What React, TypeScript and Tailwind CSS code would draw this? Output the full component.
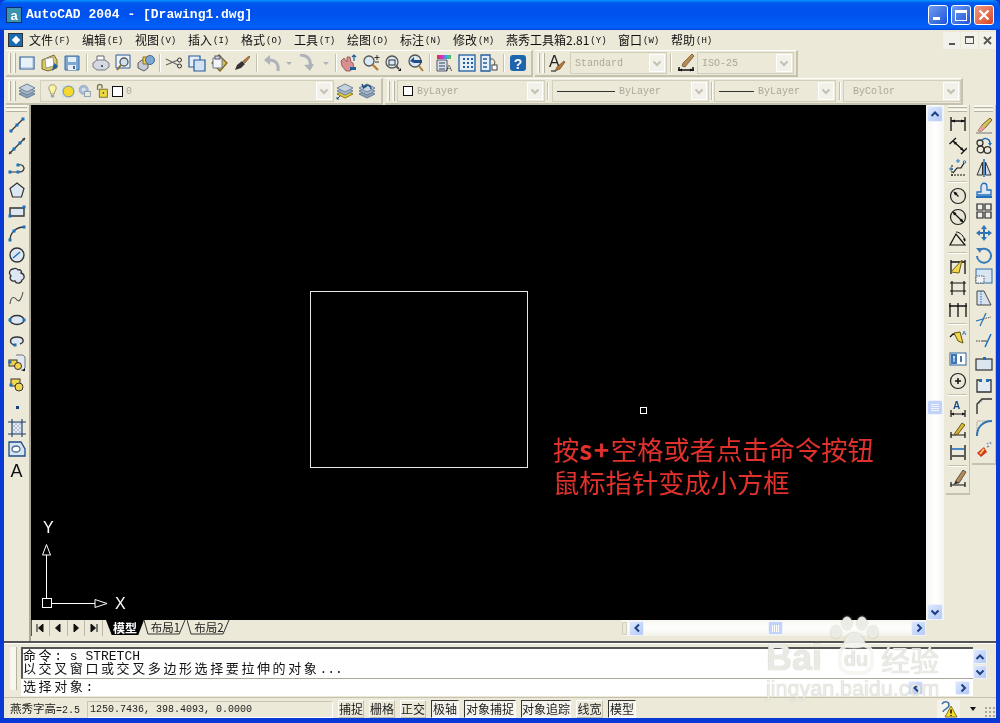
import React from "react";

const mono = "font-['Liberation_Mono','Noto_Sans_CJK_SC',monospace]";
const cjk = "font-['Noto_Sans_CJK_SC','Liberation_Sans',sans-serif]";
const B = "#1f6fc0";
const N = ({ x, y }: { x: number; y: number }) => <rect x={x - 1.5} y={y - 1.5} width="3" height="3" fill={B} />;
const S = ({ children, s = 18 }: { children: React.ReactNode; s?: number }) => (
  <svg width={s} height={s} viewBox="0 0 18 18" fill="none" className="block">{children}</svg>
);
const D = "#333333";
const Sheet = "#dbe8f4";
const Y = "#f2d64b";

const icons: Record<string, React.ReactNode> = {
  line: <><path d="M3 15L15 3" stroke={D} strokeWidth="1.2" /><N x={3} y={15} /><N x={9} y={9} /><N x={15} y={3} /></>,
  xline: <><path d="M1 17L17 1" stroke={D} strokeWidth="1.2" /><path d="M1 17l3-.8L1.8 14zM17 1l-3 .8L16.2 4z" fill={D} /><N x={6} y={12} /><N x={12} y={6} /></>,
  pline: <><path d="M2 13H11C16 13 17 9 15 7 14 6 12 5.500 10 6" stroke={D} strokeWidth="1.2" /><N x={2} y={13} /><N x={10} y={13} /><N x={10} y={6} /></>,
  polygon: <><path d="M9 2L16 7.500 13.500 16H4.500L2 7.500Z" fill={Sheet} stroke={D} strokeWidth="1.2" /></>,
  rect: <><path d="M2 6H16V14H2Z" fill={Sheet} stroke={D} strokeWidth="1.4" /><N x={16} y={5} /><N x={2} y={14} /></>,
  arc: <><path d="M2 16C2 9 8 3 16 3" stroke={D} strokeWidth="1.3" /><N x={2} y={16} /><N x={6} y={7} /><N x={16} y={3} /></>,
  circle: <><circle cx="9" cy="9" r="7" fill={Sheet} stroke={D} strokeWidth="1.4" /><path d="M5 12L12 6" stroke={B} strokeWidth="1.4" /></>,
  cloud: <><path d="M5 2C8 0 10 3 10 3 13 2 14 5 13 6 17 7 17 12 14 13 13 17 8 17 7 14 3 15 1 11 3 9 0 6 2 2 5 2Z" fill={Sheet} stroke={D} strokeWidth="1.3" /></>,
  spline: <><path d="M2 15C3 6 7 8 9 11 11 14 14 9 15 3" stroke="#555" strokeWidth="1.1" /></>,
  ellipse: <><ellipse cx="9" cy="9" rx="7" ry="4.500" fill={Sheet} stroke={D} strokeWidth="1.4" /><N x={2} y={9} /><N x={16} y={9} /></>,
  earc: <><path d="M6 13C1 11 1 5 9 5 16 5 17 10 12 12" stroke={D} strokeWidth="1.4" fill={Sheet} /><N x={7} y={13} /></>,
  insert: <><path d="M8 1H15L17 3V14L15 16H13" stroke="#777" strokeWidth="1" fill="#dfe8ee" /><rect x="1" y="6" width="8" height="6" fill={Y} stroke={D} /><circle cx="10" cy="12" r="3.500" fill={Y} stroke={D} /><N x={2} y={8} /><path d="M14 17l3-3v3z" fill="#111" /></>,
  block: <><rect x="3" y="3" width="9" height="7" fill={Y} stroke={D} /><circle cx="11" cy="11" r="4" fill={Y} stroke={D} /><N x={3} y={9} /></>,
  point: <><rect x="8" y="9" width="3" height="3" fill="#1b3f78" /></>,
  hatch: <><path d="M4 3H14V15H4Z" fill="#b7c4d8" /><path d="M4 7L8 3M4 11L12 3M4 15L14 5M8 15L14 9M12 15L14 13M8 3L14 9M4 3L14 13M4 7L12 15M4 11L8 15" stroke="#fff" strokeWidth=".7" /><path d="M4 0V18M14 0V18M0 3H18M0 15H18" stroke="#1c3d6d" strokeWidth="1.1" /></>,
  region: <><path d="M1 2H13L17 9V16H1Z" fill="#d7e3ee" stroke="#1c4e86" strokeWidth="1.300" /><ellipse cx="8" cy="9" rx="4" ry="3" fill="#fff" stroke="#466a95" strokeWidth="1.3" /></>,
  dimlin: <><path d="M2 1V15M16 1V15M2 5H16" stroke="#111" strokeWidth="1.3" /><path d="M2 5l4-1.500v3zM16 5l-4-1.500v3z" fill="#111" /></>,
  dimali: <><path d="M4 4L15 14M0.500 7L7 1M12 17L18 11" stroke="#111" strokeWidth="1.3" /><path d="M4 4l4 1.500-2 2.500zM15 14l-4-1.500 2-2.500z" fill="#111" /></>,
  ord: <><path d="M2 16H17M3 6V17" stroke="#111" strokeWidth="1" strokeDasharray="2 1" /><path d="M4 14L8 9H12L15 4" stroke="#111" strokeWidth="1.200" /><circle cx="15.500" cy="3" r="1.200" stroke={B} /><circle cx="2" cy="10" r="1.200" stroke={B} /><circle cx="9" cy="2" r="1.200" stroke={B} /></>,
  dimrad: <><circle cx="9" cy="9" r="7.500" fill="#e7e5d6" stroke="#222" strokeWidth="1.2" /><path d="M5 5L9.500 9.500" stroke="#111" strokeWidth="1.3" /><path d="M4.500 4.500l4 1.500-2.500 2.500z" fill="#111" /></>,
  dimdia: <><circle cx="9" cy="9" r="7.500" fill="#e7e5d6" stroke="#222" strokeWidth="1.2" /><path d="M4 4L14 14" stroke="#111" strokeWidth="1.3" /><path d="M3.500 3.500l4 1.500-2.500 2.500zM14.500 14.500l-4-1.500 2.500-2.500z" fill="#111" /></>,
  dimang: <><path d="M1 15H16L7 4Z" stroke="#111" strokeWidth="1.2" /><path d="M7 2C11 2 15 6 16 11" stroke="#111" /><path d="M16 12l-2-3 2.500-.5z" fill="#111" /></>,
  qdim: <><path d="M2 2V16M16 2V16M2 4H16" stroke="#111" strokeWidth="1.3" /><path d="M2 14L13 2 10 15Z" fill={Y} stroke="#6c6015" /></>,
  dimbase: <><path d="M3 2V16M15 2V16M1 4H17M1 12H17" stroke="#111" strokeWidth="1.200" /></>,
  dimcont: <><path d="M1 2V16M9 2V16M17 2V16M0 5H18" stroke="#111" strokeWidth="1.300" /></>,
  lead: <><path d="M1 8L4 5 9 6" stroke="#111" strokeWidth="1.300" /><path d="M5 4L11 3 14 14 9 12Z" fill={Y} stroke="#5c5710" /><text x="13" y="6" fontSize="6" fill={B} fontFamily="Liberation Sans" fontWeight="700">A</text></>,
  tol: <><rect x="1" y="3" width="16" height="12" fill="#fff" stroke="#2b64a0" /><rect x="2" y="4" width="6" height="10" fill="#3b76b5" /><path d="M5 6V12M4 7H6M11 5V13" stroke="#fff" /><path d="M12 6V12" stroke="#17457d" strokeWidth="1.500" /></>,
  center: <><circle cx="9" cy="9" r="7.500" fill="#e9e7d8" stroke="#222" strokeWidth="1.200" /><path d="M6 9H12M9 6V12" stroke="#111" strokeWidth="1.500" /></>,
  dimedit: <><text x="4" y="9" fontSize="10" fontWeight="700" fontFamily="Liberation Sans" fill="#1c4e86">A</text><path d="M2 10V17M16 10V17M2 14H16" stroke="#111" strokeWidth="1.200" /><path d="M2 14l3-1.500v3zM16 14l-3-1.500v3z" fill="#111" /></>,
  dimtedit: <><path d="M2 11V17M16 11V17M2 14H16" stroke="#111" strokeWidth="1.200" /><path d="M6 12L13 2 16 4 9 13 5 14Z" fill="#d8b63a" stroke="#6a5a10" /></>,
  dimupd: <><path d="M2 2V17M16 2V17" stroke="#111" strokeWidth="1.300" /><path d="M3 6H15" stroke={B} strokeWidth="1.600" /><path d="M3 13H15" stroke="#111" strokeWidth="1.300" /></>,
  dimstyle: <><path d="M2 12V17M16 12V17M2 15H16" stroke="#111" strokeWidth="1.200" /><path d="M6 12L10 13 17 2 14 0Z" fill="#b68a55" stroke="#555" /><path d="M4 15L7 11 10 13Z" fill="#333" /></>,
  erase: <><path d="M3 15L7 9 15 2 17 4 10 12 7 15Z" fill="#d9c15a" stroke="#6b5f2b" /><path d="M7 9L10 12 7 15H3Z" fill="#e9a0a0" /><path d="M1 17H17" stroke="#777" /></>,
  copy: <><circle cx="5" cy="6" r="3" stroke="#333" strokeWidth="1.300" /><circle cx="5.500" cy="12.500" r="3.300" stroke="#333" strokeWidth="1.300" /><circle cx="12.500" cy="13" r="3.300" stroke="#333" strokeWidth="1.300" /><path d="M7 3C10 0 15 2 15 6" stroke={B} strokeWidth="1.500" /><path d="M13 6h4l-2 3z" fill={B} /></>,
  mirror: <><path d="M7.500 3V16H2Z" fill="#e0e0d5" stroke="#333" /><path d="M10.500 3V16H16Z" fill="#cfd9e5" stroke="#333" /><path d="M9 0V18" stroke={B} strokeWidth="1.500" /></>,
  offset: <><path d="M2 14V11H6V6C6 1 12 1 12 6V9H16V14Z" stroke={B} strokeWidth="1.300" fill="#dce7f2" /><path d="M1 16H17" stroke={B} strokeWidth="2" /></>,
  array: <><path d="M2 2H8V8H2ZM10 2H16V8H10ZM2 10H8V16H2ZM10 10H16V16H10Z" stroke="#222" strokeWidth="1.200" fill="#eeeeea" /></>,
  move: <><path d="M9 1L12 5H10V8H13V6L17 9 13 12V10H10V13H12L9 17 6 13H8V10H5V12L1 9 5 6V8H8V5H6Z" fill="#2f74b5" /></>,
  rotate: <><path d="M5 4A7 7 0 1 1 2 10" stroke="#3a7bbb" strokeWidth="2" /><path d="M1 2L7 2 5 7Z" fill="#3a7bbb" /></>,
  scale: <><rect x="1" y="2" width="16" height="14" fill="#d8e5f2" stroke="#2f6ca8" /><rect x="1" y="9" width="8" height="7" fill="#eef3f8" stroke="#555" strokeDasharray="1.500 1" /></>,
  stretch: <><path d="M2 2H9L16 16H2Z" fill="#d8e2ec" stroke="#444" /><path d="M6 2V16" stroke={B} strokeDasharray="1.500 1" /></>,
  trim: <><path d="M1 10L8 8" stroke={B} strokeWidth="1.300" /><path d="M8 8L16 6" stroke="#555" strokeDasharray="1.500 1" /><path d="M11 2L5 15" stroke="#2f74b5" strokeWidth="1.300" /></>,
  extend: <><path d="M1 9H7" stroke="#444" strokeDasharray="1.500 1" /><path d="M7 9H12" stroke="#444" /><path d="M16 2L10 15" stroke={B} strokeWidth="1.500" /></>,
  breakp: <><rect x="1" y="5" width="16" height="11" fill="#dbe5ef" stroke="#333" strokeWidth="1.200" /><rect x="8" y="3" width="3" height="3" fill={B} /></>,
  breakg: <><path d="M2 6H16V16H2Z" fill="#e3ebf3" /><path d="M5 4H2V16H16V4H13" stroke="#333" strokeWidth="1.300" /><rect x="4" y="3" width="3" height="3" fill={B} /><rect x="11" y="3" width="3" height="3" fill={B} /></>,
  chamfer: <><path d="M2 17V7L7 2H17" stroke="#333" strokeWidth="1.400" /><path d="M2 8L9 2" stroke={B} strokeDasharray="1.500 1" /></>,
  fillet: <><path d="M2 17V2H17" stroke="#999" strokeDasharray="1.500 1" /><path d="M2 17C2 8 8 2 17 2" stroke="#2f74b5" strokeWidth="2" /></>,
  explode: <><path d="M2 13L9 7 12 12 6 17Z" fill="#d3342a" /><path d="M5 14L9 9" stroke="#f3d24d" strokeWidth="2" /><path d="M12 3l1 1M15 2l1 2M12 7l2-1" stroke="#7a8fb0" strokeWidth="1.500" /></>,
  new: <><path d="M2 3H16V15H2Z" fill="#e8f0f8" stroke="#2a5c9a" strokeWidth="1.200" /><path d="M15 4V14H3" stroke="#9fb9d4" /></>,
  open: <><path d="M1 6L13 1 16 6V14L7 17 1 15Z" fill="#d9c76c" stroke="#7f6d2c" /><path d="M4 5L12 3 13 12 5 14Z" fill="#fff" stroke="#9b9b8b" /><path d="M11 17L13 9 17 12Z" fill="#1f5f9e" /></>,
  save: <><path d="M2 2H16V16H2Z" fill="#7ea8d2" stroke="#3a6ca3" /><rect x="5" y="3" width="8" height="5" fill="#e2edf7" /><rect x="5" y="11" width="8" height="5" fill="#e9eef3" /><rect x="10" y="12" width="2" height="3" fill="#3a6ca3" /></>,
  print: <><path d="M5 2H12V8H5Z" fill="#fff" stroke="#667" /><path d="M1 9L5 6H13L17 9V13L13 16H5L1 13Z" fill="#d4d8e0" stroke="#778" /><circle cx="10" cy="12" r="1" fill="#334" /></>,
  preview: <><path d="M2 1H16V14H2Z" fill="#eef3f8" stroke="#2a5c9a" /><circle cx="10" cy="8" r="4" fill="#cfe0f0" stroke="#555" strokeWidth="1.300" /><path d="M7 11L3 16" stroke="#8a6a30" strokeWidth="2" /></>,
  publish: <><path d="M1 9L5 6H11V14L7 17L1 14Z" fill="#c7ccd6" stroke="#556" /><path d="M6 3H12V10H6Z" fill="#f2cf4f" stroke="#8a6d1a" /><circle cx="13" cy="6" r="4.500" fill="#7ea8d4" stroke="#46688f" /></>,
  cut: <><path d="M1 5L13 11M1 11L13 6" stroke="#666" strokeWidth="1.100" /><circle cx="14.500" cy="6" r="2" stroke="#333" /><circle cx="14.500" cy="12" r="2" stroke="#333" /></>,
  dup: <><path d="M1 2H12V13H1Z" fill="#e5eef7" stroke="#2a5c9a" strokeWidth="1.200" /><path d="M6 6H17V17H6Z" fill="#d3e2f1" stroke="#2a5c9a" strokeWidth="1.200" /></>,
  paste: <><path d="M9 1L17 9 10 17 2 9Z" fill="#d9b85c" stroke="#7a641b" strokeWidth="1.200" /><path d="M3 4H12V14H3Z" fill="#f2f4f7" stroke="#6a7b90" /><rect x="5" y="2" width="5" height="3" fill="#cfd7e0" stroke="#556" /></>,
  brush: <><path d="M10 7L16 2 17 3 12 9Z" fill="#b6793a" stroke="#6e4a20" strokeWidth=".6" /><path d="M4 11L9 7 12 10 8 14 2 16Z" fill="#333" /></>,
  undo: <><path d="M15 17C16 9 12 6 6 6" stroke="#aeb3ba" strokeWidth="3" /><path d="M7 1L1 6 7 11Z" fill="#aeb3ba" /></>,
  redo: <><path d="M3 1C9 1 15 4 13 14" stroke="#aeb3ba" strokeWidth="3" fill="none" /><path d="M7 11L13 17 17 10Z" fill="#aeb3ba" /></>,
  pan: <><path d="M2 7L5 4 8 8 8 3 11 3 12 8 14 9 15 14 11 17H7L3 12Z" fill="#d99090" stroke="#8a4a4a" strokeWidth=".8" /><path d="M11 16h6v-3h-6z" fill="#1f5f9e" /><path d="M15 1V7M13 3l2-2 2 2" stroke="#1f5f9e" strokeWidth="1.200" /></>,
  zoomr: <><circle cx="7" cy="7" r="5" fill="#d9e8f5" stroke="#555" strokeWidth="1.300" /><path d="M10.500 10.500L16 16" stroke="#b27d30" strokeWidth="2.200" /><path d="M15 1V6M12.500 3.500H17.500M13 8H17" stroke="#333" /></>,
  zoomw: <><circle cx="8" cy="8" r="6" fill="#d9e8f5" stroke="#555" strokeWidth="1.300" /><rect x="5" y="6" width="6" height="5" stroke="#333" /><path d="M12 12L15 15" stroke="#555" strokeWidth="2" /><path d="M14 17l3-3v3z" fill="#111" /></>,
  zoomp: <><circle cx="8" cy="7" r="6" fill="#d9e8f5" stroke="#555" strokeWidth="1.300" /><path d="M3 7L7 3V6H15V9H7Z" fill="#1f4f84" /><path d="M12 12L16 17" stroke="#b27d30" strokeWidth="2" /></>,
  props: <><path d="M2 1H16V5H2Z" fill="url(#rb)" /><defs><linearGradient id="rb"><stop offset="0" stopColor="#e03030" /><stop offset=".35" stopColor="#d030d0" /><stop offset=".7" stopColor="#30b0e0" /><stop offset="1" stopColor="#50c050" /></linearGradient></defs><path d="M2 6H12V17H2Z" fill="#d8e2ec" stroke="#556" /><path d="M4 9H10M4 12H10M4 15H10" stroke="#345" /><text x="11" y="17" fontSize="9" fontFamily="Liberation Sans" fill="#333">A</text></>,
  design: <><rect x="1" y="1" width="16" height="16" fill="#e5eef7" stroke="#1f5f9e" strokeWidth="1.300" /><path d="M5 4H7V6H5ZM9 4H11V6H9ZM13 4H15V6H13ZM5 8H7V10H5ZM9 8H11V10H9ZM13 8H15V10H13ZM5 12H7V14H5ZM9 12H11V14H9ZM13 12H15V14H13Z" fill="#1f5f9e" /></>,
  palette: <><path d="M1 1H10V17H1Z" fill="#e5eef7" stroke="#1f5f9e" strokeWidth="1.300" /><path d="M3 5H7M3 9H7M3 13H7" stroke="#1f5f9e" strokeWidth="1.500" /><path d="M10 5C14 4 16 8 14 11" stroke="#444" /><rect x="12" y="11" width="5" height="5" fill="#fff" stroke="#444" /></>,
  help: <><rect x="1" y="1" width="16" height="16" rx="3" fill="#1d65ad" /><text x="9" y="14.500" fontSize="14" fontWeight="700" fontFamily="Liberation Sans" textAnchor="middle" fill="#fff">?</text></>,
  textstyle: <><text x="1" y="13" fontSize="16" fontFamily="Liberation Sans" fill="#222">A</text><path d="M3 17H8" stroke="#111" /><path d="M9 13L16 7 17 8 12 15 7 17Z" fill="#b6793a" stroke="#5b3b18" strokeWidth=".6" /></>,
  layers: <><path d="M9 8L17 12 9 16 1 12Z" fill="#8da2b8" stroke="#6b7f94" /><path d="M9 5L17 9 9 13 1 9Z" fill="#a9bacb" stroke="#6b7f94" /><path d="M9 2L17 6 9 10 1 6Z" fill="#c7d4e0" stroke="#6b7f94" /></>,
  layer2: <><path d="M9 8L17 12 9 16 1 12Z" fill="#e2c93f" stroke="#8a7a18" /><path d="M9 5L17 9 9 13 1 9Z" fill="#a9bacb" stroke="#6b7f94" /><path d="M9 2L17 6 9 10 1 6Z" fill="#c7d4e0" stroke="#6b7f94" /><path d="M1 17l3-3M1 15v2h2" stroke="#1f4f84" /></>,
  layer3: <><path d="M9 8L17 12 9 16 1 12Z" fill="#8da2b8" stroke="#6b7f94" /><path d="M9 5L17 9 9 13 1 9Z" fill="#a9bacb" stroke="#6b7f94" /><path d="M9 2L17 6 9 10 1 6Z" fill="#c7d4e0" stroke="#6b7f94" /><path d="M13 7C13 3 8 2 6 5M4 2L5.500 6 9 4" stroke="#1f4f84" strokeWidth="1.400" /></>,
  bulb: <><path d="M9 1C13 1 14 4 13 7 12 9 11 10 11 12H7C7 10 6 9 5 7 4 4 5 1 9 1Z" fill="#fdf3a5" stroke="#8a8a60" /><path d="M7 13H11V16H7Z" fill="#9aa5b2" /></>,
  sun: <><rect x="1" y="2" width="15" height="14" fill="#cfdff0" /><circle cx="9" cy="9" r="6.500" fill="#f5d82f" stroke="#5f7fa5" /></>,
  gear: <><circle cx="8" cy="7" r="5.500" fill="#a8bdd4" stroke="#7e97b3" strokeDasharray="2 1" /><circle cx="8" cy="7" r="2.500" fill="#d5e0ec" /><rect x="9" y="9" width="7" height="6" fill="#ece9d8" stroke="#7e97b3" /></>,
  lock: <><path d="M4 8V4C4 1 9 1 9 4V6" stroke="#7c7c50" strokeWidth="1.600" /><rect x="6" y="7" width="9" height="9" fill="#f0d93f" stroke="#6a6a30" /><circle cx="10.500" cy="11" r="1" fill="#444" /></>,
  dim: <><path d="M1 16H17M2 13V17M16 13V17" stroke="#111" strokeWidth="1.500" /><path d="M2 16l3-1.500v3zM16 16l-3-1.500v3z" fill="#111" /><path d="M5 12L8 13 17 2 15 0 6 9Z" fill="#b58a55" stroke="#5b3b18" strokeWidth=".6" /></>,
};

const Ico = ({ n, s }: { n: string; s?: number }) => <S s={s}>{icons[n]}</S>;

const Chev = ({ dir, c = "#1d3f86", size = 10 }: { dir: "up" | "down" | "left" | "right"; c?: string; size?: number }) => {
  const d = { up: "M1.500 7L5 3.500 8.500 7", down: "M1.500 3.500L5 7 8.500 3.500", left: "M7 1.500L3.500 5 7 8.500", right: "M3.500 1.500L7 5 3.500 8.500" }[dir];
  return (
    <svg width={size} height={size} viewBox="0 0 10 10" fill="none" className="block">
      <path d={d} stroke={c} strokeWidth="2" />
    </svg>
  );
};

const Btn = ({ n, w = "w-[22.5px]" }: { n: string; w?: string }) => (
  <div className={`${w} h-full flex items-center justify-center shrink-0`}><Ico n={n} /></div>
);
const Sep = ({ w = "w-[6px]" }: { w?: string }) => (
  <div className={`${w} h-[18px] shrink-0 flex justify-center`}><div className="w-[2px] h-full border-l border-[#c4c1ae] border-r border-r-white" /></div>
);
const Grip = () => (
  <div className="w-[10px] h-full shrink-0 pl-[2px] py-[2px] flex gap-[2px]">
    <div className="w-[3px] h-full bg-[#f7f6ef] border-r border-[#b5b2a0]" />
    <div className="w-[3px] h-full bg-[#f7f6ef] border-r border-[#b5b2a0]" />
  </div>
);
const Bar = ({ children, w }: { children: React.ReactNode; w: string }) => (
  <div className={`${w} h-full flex items-center border-b-2 border-r-2 border-[#c4c1ae] border-t border-t-white shrink-0`}>{children}</div>
);
const Arrow = ({ w }: { w: string }) => (
  <div className={`${w} h-full flex items-center justify-center shrink-0`}>
    <div className="w-0 h-0 border-x-[3px] border-x-transparent border-t-[3px] border-t-[#aeb3ba]" />
  </div>
);
const Combo = ({ w, children, ml = "ml-0" }: { w: string; children: React.ReactNode; ml?: string }) => (
  <div className={`${w} ${ml} h-[22px] shrink-0 flex items-center border border-[#d2cfbd] pl-[3px] pr-[1px] ${mono} text-[10px] text-[#aca899]`}>
    <div className="flex-1 flex items-center min-w-0 h-full">{children}</div>
    <div className="w-[16px] h-[18px] bg-[#f3f2ea] border border-white flex items-center justify-center"><Chev dir="down" c="#c3c0b0" /></div>
  </div>
);
const SB = ({ dir, cls = "w-[15px] h-[15px]" }: { dir: "up" | "down" | "left" | "right"; cls?: string }) => (
  <div className={`${cls} shrink-0 rounded-[2px] border border-[#eef2fb] bg-gradient-to-br from-[#dde8fd] to-[#b4c9f5] flex items-center justify-center`}><Chev dir={dir} /></div>
);
const Tool = ({ n }: { n: string }) => <div className="h-[21.65px] shrink-0 flex items-center justify-center"><Ico n={n} /></div>;
const HGrip = () => (
  <div className="h-[9px] shrink-0 mx-[2px] flex flex-col gap-[1px]">
    <div className="h-[3px] bg-[#f7f6ef] border-b border-[#b5b2a0]" />
    <div className="h-[3px] bg-[#f7f6ef] border-b border-[#b5b2a0]" />
  </div>
);
const HSep = () => <div className="h-[2px] my-[2px] mx-[2px] border-t border-[#c4c1ae] border-b border-b-white shrink-0" />;
const StatusBtn = ({ t, w, on }: { t: string; w: string; on?: boolean }) => (
  <div className={`${w} h-[18px] shrink-0 flex items-center justify-center whitespace-nowrap text-[12px] text-[#222] ${cjk} ${on ? "border border-t-[#333] border-l-[#333] border-r-white border-b-white bg-[#f5f4ec]" : "border border-r-[#c4c1ae] border-b-[#c4c1ae] border-t-white border-l-white"}`}>{t}</div>
);
const Menu = ({ t, k, w = "w-[53px]" }: { t: string; k: string; w?: string }) => (
  <div className={`${w} shrink-0 flex items-center text-[12px] text-[#111] ${cjk}`}>
    <span>{t}</span><span className={`${mono} text-[9px] ml-[1px] mt-[3px]`}>({k})</span>
  </div>
);
const Tab = ({ t, w }: { t: string; w: string }) => (
  <div className={`${w} h-[15px] shrink-0 relative text-[#222] text-[11.500px] leading-[14px] text-center font-['Noto_Sans_CJK_SC',sans-serif]`}>
    {t}
    <svg viewBox="0 0 44 15" preserveAspectRatio="none" className="absolute inset-0 w-full h-full">
      <path d="M0 0L4 14H36L42 0" stroke="#333" fill="none" />
    </svg>
  </div>
);
const cmdRow = "tracking-[2.600px]";
const wm = "[text-shadow:0_0_1px_#b0b0a8]";

export default function App() {
  return (
    <div className="w-[1000px] h-[723px] flex flex-col overflow-hidden bg-[#0a3ad6] relative [filter:blur(0.35px)]">
      {/* title */}
      <div className="h-[30px] shrink-0 flex items-center pl-[6px] pr-[6px] rounded-t-[7px] bg-[linear-gradient(to_bottom,#0997ff_0%,#0058ee_10%,#0050ee_45%,#0060f8_88%,#0058f0_95%,#003dd7_100%)]">
        <div className="w-[16px] h-[16px] bg-[#3d92ad] border border-[#0d2d6b] flex items-center justify-center text-white text-[13px] font-bold leading-none font-['Liberation_Sans',sans-serif]">a</div>
        <div className="ml-[4px] text-white font-bold text-[13px] font-['Liberation_Mono',monospace] whitespace-pre">AutoCAD 2004 - [Drawing1.dwg]</div>
        <div className="flex-1" />
        <div className="flex gap-[3px]">
          <div className="w-[20px] h-[20px] rounded-[3px] border border-white bg-gradient-to-br from-[#6f9bf0] to-[#1f52d8] flex items-end pl-[4px] pb-[4px]"><div className="w-[7px] h-[3px] bg-white" /></div>
          <div className="w-[20px] h-[20px] rounded-[3px] border border-white bg-gradient-to-br from-[#6f9bf0] to-[#1f52d8] flex items-center justify-center"><div className="w-[12px] h-[11px] border border-white border-t-[3px]" /></div>
          <div className="w-[20px] h-[20px] rounded-[3px] border border-white bg-gradient-to-br from-[#ee9a80] to-[#d8401c] flex items-center justify-center">
            <svg width="12" height="12" viewBox="0 0 12 12"><path d="M1.500 1.500L10.500 10.500M10.500 1.500L1.500 10.500" stroke="#fff" strokeWidth="2.400" /></svg>
          </div>
        </div>
      </div>

      <div className="flex-1 min-h-0 mx-[4px] mb-[5px] flex flex-col bg-[#ece9d8]">
        {/* menu */}
        <div className="h-[20px] shrink-0 flex items-center pl-[4px]">
          <div className="w-[21px] shrink-0">
            <div className="w-[15px] h-[14px] bg-[#1b6cb4] border border-[#333] flex items-center justify-center"><div className="w-[6px] h-[6px] bg-white rotate-45" /></div>
          </div>
          <Menu t="文件" k="F" /><Menu t="编辑" k="E" /><Menu t="视图" k="V" /><Menu t="插入" k="I" /><Menu t="格式" k="O" /><Menu t="工具" k="T" /><Menu t="绘图" k="D" /><Menu t="标注" k="N" /><Menu t="修改" k="M" />
          <Menu t="燕秀工具箱2.81" k="Y" w="w-[112px]" /><Menu t="窗口" k="W" /><Menu t="帮助" k="H" />
          <div className="flex-1" />
          <div className="flex gap-[1px]">
            <div className="w-[17px] h-[17px] bg-[#f3f2ea] flex items-end justify-center pb-[4px]"><div className="w-[6px] h-[2px] bg-[#555]" /></div>
            <div className="w-[17px] h-[17px] bg-[#f3f2ea] flex items-center justify-center"><div className="w-[9px] h-[8px] border border-[#555] border-t-2" /></div>
            <div className="w-[17px] h-[17px] bg-[#f3f2ea] flex items-center justify-center"><svg width="9" height="9" viewBox="0 0 9 9"><path d="M1 1L8 8M8 1L1 8" stroke="#555" strokeWidth="1.800" /></svg></div>
          </div>
        </div>
        {/* toolbar 1 */}
        <div className="h-[27px] shrink-0 flex pl-[2px] gap-[2px]">
          <Bar w="w-[527px]">
            <Grip />
            <Btn n="new" /><Btn n="open" /><Btn n="save" /><Sep />
            <Btn n="print" /><Btn n="preview" /><Btn n="publish" /><Sep />
            <Btn n="cut" /><Btn n="dup" /><Btn n="paste" /><Btn n="brush" /><Sep w="w-[8px]" />
            <Btn n="undo" w="w-[22px]" /><Arrow w="w-[12px]" /><Btn n="redo" w="w-[22px]" /><Arrow w="w-[17px]" /><Sep w="w-[3px]" />
            <Btn n="pan" /><Btn n="zoomr" /><Btn n="zoomw" /><Btn n="zoomp" /><Sep />
            <Btn n="props" /><Btn n="design" /><Btn n="palette" /><Sep />
            <Btn n="help" w="w-[22px]" />
          </Bar>
          <Bar w="w-[263px]">
            <Grip />
            <Btn n="textstyle" w="w-[23px]" />
            <Combo w="w-[97px]" ml="ml-[2px]"><span className="ml-[1px]">Standard</span></Combo>
            <Sep w="w-[8px]" />
            <Btn n="dim" w="w-[22px]" />
            <Combo w="w-[97px]"><span className="ml-[1px]">ISO-25</span></Combo>
          </Bar>
        </div>
        {/* toolbar 2 */}
        <div className="h-[28px] shrink-0 flex pl-[2px] gap-[2px] pt-[1px]">
          <Bar w="w-[377px]">
            <Grip />
            <Btn n="layers" w="w-[22px]" />
            <Combo w="w-[294px]" ml="ml-[2px]">
              <div className="flex items-center gap-[0px]">
                <div className="w-[16px] flex justify-center"><Ico n="bulb" s={15} /></div>
                <div className="w-[16px] flex justify-center"><Ico n="sun" s={15} /></div>
                <div className="w-[16px] flex justify-center"><Ico n="gear" s={15} /></div>
                <div className="w-[19px] flex justify-center"><Ico n="lock" s={16} /></div>
                <div className="w-[11px] h-[11px] bg-white border border-[#111] ml-[1px]" />
                <span className="ml-[3px]">0</span>
              </div>
            </Combo>
            <Btn n="layer2" w="w-[22px]" /><Btn n="layer3" w="w-[22px]" />
          </Bar>
          <Bar w="w-[578px]">
            <Grip />
            <Combo w="w-[148px]" ml="ml-[2px]">
              <div className="w-[10px] h-[10px] bg-white border border-[#111] ml-[2px]" />
              <span className="ml-[4px]">ByLayer</span>
            </Combo>
            <Sep />
            <Combo w="w-[157px]" ml="ml-[1px]">
              <div className="w-[58px] h-[1px] bg-[#333] ml-[1px]" />
              <span className="ml-[4px]">ByLayer</span>
            </Combo>
            <Sep />
            <Combo w="w-[122px]" ml="ml-[-1px]">
              <div className="w-[35px] h-[1px] bg-[#333] ml-[1px]" />
              <span className="ml-[4px]">ByLayer</span>
            </Combo>
            <Sep w="w-[7px]" />
            <Combo w="w-[118px]"><span className="ml-[6px]">ByColor</span></Combo>
          </Bar>
        </div>

        {/* main */}
        <div className="flex-1 min-h-0 flex">
          {/* left tools */}
          <div className="w-[27px] shrink-0 flex flex-col border-r-2 border-[#aca899]">
            <HGrip />
            <Tool n="line" /><Tool n="xline" /><Tool n="pline" /><Tool n="polygon" /><Tool n="rect" /><Tool n="arc" /><Tool n="circle" /><Tool n="cloud" /><Tool n="spline" /><Tool n="ellipse" /><Tool n="earc" /><Tool n="insert" /><Tool n="block" /><Tool n="point" /><Tool n="hatch" /><Tool n="region" />
            <div className="h-[21.65px] shrink-0 flex items-center justify-center text-[18px] leading-none text-[#111] font-['Liberation_Sans',sans-serif]">A</div>
          </div>
          {/* center */}
          <div className="flex-1 min-w-0 flex flex-col">
            <div className="h-[515px] shrink-0 flex">
              <div className="flex-1 bg-black relative overflow-hidden">
                <div className="absolute left-[279px] top-[186px] w-[218px] h-[177px] border border-[#e6e6e6]" />
                <div className="absolute left-[609px] top-[302px] w-[7px] h-[7px] border border-white" />
                <div className={`absolute left-[522px] top-[327px] text-[26.300px] leading-[33px] text-[#e0312d] whitespace-nowrap ${cjk}`}>
                  <div>按<span className="font-bold tracking-[1.500px]">s+</span>空格或者点击命令按钮</div>
                  <div>鼠标指针变成小方框</div>
                </div>
                <svg width="70" height="72" viewBox="0 0 70 72" className="absolute left-[8px] top-[438px]">
                  <path d="M7.500 12V56M13 60.500H56" stroke="#fff" />
                  <rect x="3.500" y="55.500" width="9" height="9" stroke="#fff" />
                  <path d="M7.500 1.500L3.500 12H11.500Z" stroke="#fff" />
                  <path d="M68 60.500L56 56.500V64.500Z" stroke="#fff" />
                </svg>
                <span className="absolute left-[12px] top-[414px] text-white text-[16px] leading-[18px] font-['Liberation_Sans',sans-serif]">Y</span>
                <span className="absolute left-[84px] top-[490px] text-white text-[16px] leading-[18px] font-['Liberation_Sans',sans-serif]">X</span>
              </div>
              {/* v scroll */}
              <div className="w-[18px] shrink-0 flex flex-col items-center bg-gradient-to-r from-[#f5f5f0] via-white to-[#f5f5f0] pt-[1px]">
                <SB dir="up" cls="w-[16px] h-[16px]" />
                <div className="h-[278px] shrink-0" />
                <div className="w-[16px] h-[15px] rounded-[2px] border border-[#eef2fb] bg-[#c3d3f8] flex flex-col gap-[1px] items-center justify-center">
                  <div className="w-[8px] h-[1px] bg-[#eef3ff]" /><div className="w-[8px] h-[1px] bg-[#eef3ff]" /><div className="w-[8px] h-[1px] bg-[#eef3ff]" /><div className="w-[8px] h-[1px] bg-[#eef3ff]" />
                </div>
                <div className="flex-1" />
                <SB dir="down" cls="w-[16px] h-[16px]" />
              </div>
            </div>
            {/* tabs */}
            <div className="h-[16px] shrink-0 flex items-stretch">
              <div className="w-[72px] shrink-0 flex border-l border-[#555] text-[#111]">
                {["M2 1V9M8 1L3.500 5 8 9Z", "M7 1L2.500 5 7 9Z", "M3 1L7.500 5 3 9Z", "M2 1L6.500 5 2 9ZM8 1V9"].map((d, i) => (
                  <div key={i} className="w-[18px] flex items-center justify-center border-r border-[#bcb9a8]">
                    <svg width="10" height="10" viewBox="0 0 10 10"><path d={d} fill="#111" stroke="#111" /></svg>
                  </div>
                ))}
              </div>
              <div className="h-[15px] w-[38px] shrink-0 ml-[3px] bg-black text-white text-[12px] font-bold leading-[15px] text-center [clip-path:polygon(0_0,100%_0,85%_100%,15%_100%)] font-['Noto_Sans_CJK_SC',sans-serif]">模型</div>
              <Tab t="布局1" w="w-[43px]" />
              <Tab t="布局2" w="w-[44px]" />
              <div className="flex-1" />
              <div className="w-[304px] shrink-0 flex items-center bg-gradient-to-b from-[#f7f6f0] via-white to-[#f3f2ea]">
                <div className="w-[5px] h-[13px] bg-[#ece9d8] border border-[#cfccb9] rounded-[1px] mr-[2px]" />
                <SB dir="left" />
                <div className="w-[124px] shrink-0" />
                <div className="w-[15px] h-[14px] rounded-[2px] bg-[#c3d3f8] border border-[#eef2fb] flex gap-[1px] items-center justify-center">
                  <div className="w-[1px] h-[7px] bg-white" /><div className="w-[1px] h-[7px] bg-white" /><div className="w-[1px] h-[7px] bg-white" /><div className="w-[1px] h-[7px] bg-white" />
                </div>
                <div className="flex-1" />
                <SB dir="right" />
              </div>
              <div className="w-[18px] shrink-0" />
            </div>
          </div>
          {/* right tools */}
          <div className="w-[52px] shrink-0 flex items-start pl-[2px] gap-[2px]">
            <div className="w-[24px] h-[390px] flex flex-col border-r border-b-2 border-[#c4c1ae] shrink-0">
              <HGrip />
              <Tool n="dimlin" /><Tool n="dimali" /><Tool n="ord" /><HSep />
              <Tool n="dimrad" /><Tool n="dimdia" /><Tool n="dimang" /><HSep />
              <Tool n="qdim" /><Tool n="dimbase" /><Tool n="dimcont" /><HSep />
              <Tool n="lead" /><Tool n="tol" /><Tool n="center" /><HSep />
              <Tool n="dimedit" /><Tool n="dimtedit" /><Tool n="dimupd" /><HSep />
              <Tool n="dimstyle" />
            </div>
            <div className="w-[24px] h-[360px] flex flex-col border-r border-b-2 border-[#c4c1ae] shrink-0">
              <HGrip />
              <Tool n="erase" /><Tool n="copy" /><Tool n="mirror" /><Tool n="offset" /><Tool n="array" /><Tool n="move" /><Tool n="rotate" /><Tool n="scale" /><Tool n="stretch" /><Tool n="trim" /><Tool n="extend" /><Tool n="breakp" /><Tool n="breakg" /><Tool n="chamfer" /><Tool n="fillet" /><Tool n="explode" />
            </div>
          </div>
        </div>

        {/* command */}
        <div className="h-[56px] shrink-0 flex flex-col border-t-[2px] border-[#555]">
          <div className="flex-1 min-h-0 flex pt-[3px] pl-[6px] pr-[6px] pb-[1px] border-t border-white">
            <div className="w-[7px] h-[43px] mr-[4px] shrink-0 bg-[#f7f6ef] border-r border-[#b5b2a0]" />
            <div className={`flex-1 min-w-0 flex flex-col ${mono} text-[13px] text-[#111] leading-[13px]`}>
              <div className="h-[32px] shrink-0 flex">
                <div className="flex-1 bg-white border-t-2 border-l-2 border-[#555] border-b border-b-[#aca899] pt-[1px] whitespace-pre">
                  <div className="h-[13px]"><span className={cmdRow}>命令</span>{": s STRETCH"}</div>
                  <div className="h-[13px]"><span className={cmdRow}>以交叉窗口或交叉多边形选择要拉伸的对象</span>...</div>
                </div>
                <div className="w-[17px] flex flex-col gap-[1px] pt-[2px] shrink-0">
                  <SB dir="up" cls="w-[14px] h-[15px]" /><SB dir="down" cls="w-[14px] h-[14px]" />
                </div>
              </div>
              <div className="flex-1 flex items-center bg-white mr-[17px] pl-[2px] pr-[3px] whitespace-pre">
                <span className={cmdRow}>选择对象</span>:
                <div className="flex-1" />
                <SB dir="left" cls="w-[15px] h-[14px]" />
                <div className="w-[32px]" />
                <SB dir="right" cls="w-[15px] h-[14px]" />
              </div>
            </div>
          </div>
        </div>

        {/* status */}
        <div className="h-[21px] shrink-0 flex items-center pl-[6px] pt-[2px] border-t border-[#c4c1ae] gap-[5px]">
          <div className={`w-[72px] shrink-0 text-[11.500px] text-[#222] ${cjk} whitespace-nowrap`}>燕秀字高<span className={`${mono} text-[10px]`}>=2.5</span></div>
          <div className={`w-[246px] h-[17px] shrink-0 border border-[#c8c5b2] border-r-white border-b-white pl-[2px] ${mono} text-[10px] leading-[15px] text-[#222] whitespace-pre`}>1250.7436, 398.4093, 0.0000</div>
          <StatusBtn t="捕捉" w="w-[26px]" />
          <StatusBtn t="栅格" w="w-[26px]" />
          <StatusBtn t="正交" w="w-[26px]" />
          <StatusBtn t="极轴" w="w-[28px]" on />
          <StatusBtn t="对象捕捉" w="w-[52px]" on />
          <StatusBtn t="对象追踪" w="w-[50px]" on />
          <StatusBtn t="线宽" w="w-[27px]" />
          <StatusBtn t="模型" w="w-[28px]" on />
          <div className="flex-1" />
          <div className="w-[23px] h-[18px] bg-[#f5f4ec] flex items-center justify-center">
            <svg width="18" height="17" viewBox="0 0 18 17">
              <path d="M2 3C4 0 9 0 9 4 9 8 3 8 3 11" stroke="#3b6fae" strokeWidth="1.500" fill="none" />
              <path d="M11 5L17 16H5Z" fill="#f7dc2e" stroke="#8a7a18" />
              <path d="M11 8.500V12.500M11 14V15" stroke="#111" strokeWidth="1.500" />
            </svg>
          </div>
          <div className="w-0 h-0 ml-[5px] border-x-[3.500px] border-x-transparent border-t-[4px] border-t-[#111]" />
          <div className="w-[12px] h-[12px] self-end ml-[3px] bg-[radial-gradient(circle,#aca899_1px,transparent_1.500px)] bg-[length:4px_4px]" />
        </div>
      </div>

      {/* watermark */}
      <div className="absolute left-[766px] top-[616px] w-[184px] h-[86px] text-[#f4f4f0]/85 pointer-events-none font-['Liberation_Sans',sans-serif]">
        <svg width="52" height="34" viewBox="0 0 52 34" className="absolute left-[62px] top-[0px] [filter:drop-shadow(0_0_1px_#b0b0a8)]" fill="#f4f4f0" fillOpacity=".85">
          <ellipse cx="19" cy="7" rx="5" ry="6.500" /><ellipse cx="34" cy="7" rx="5" ry="6.500" />
          <ellipse cx="8" cy="16" rx="5" ry="6" /><ellipse cx="45" cy="16" rx="5" ry="6" />
          <path d="M15 30C17 20 22 17 26 17 31 17 36 21 38 30 30 33 22 33 15 30Z" />
        </svg>
        <div className={`absolute left-[0px] top-[24px] text-[36px] leading-[36px] font-bold ${wm}`}>Bai</div>
        <div className={`absolute left-[72px] top-[27px] w-[36px] h-[32px] rounded-[12px] border-[4px] border-[#f4f4f0]/85 text-[20px] leading-[24px] text-center font-bold ${wm}`}>du</div>
        <div className={`absolute left-[115px] top-[28px] text-[29px] leading-[30px] ${cjk} ${wm}`}>经验</div>
        <div className={`absolute left-[0px] top-[61px] text-[21.500px] leading-[24px] whitespace-nowrap ${wm}`}>jingyan.baidu.com</div>
      </div>
    </div>
  );
}
